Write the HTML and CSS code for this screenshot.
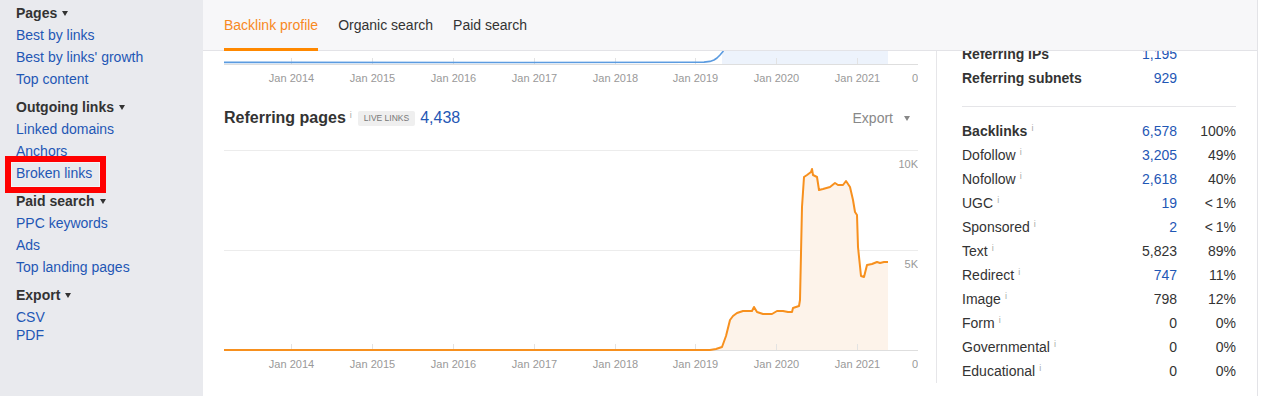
FILE: index.html
```html
<html>
  <head>
    <meta charset="utf-8">
    <link rel="stylesheet" href="styles.css">
  </head>

  <body>
    <div class="app">
      <nav class="sidebar">
        <div class="nav-group">
          <div class="nav-heading">Pages</div>
          <a class="nav-link">Best by links</a>
          <a class="nav-link">Best by links' growth</a>
          <a class="nav-link">Top content</a>
        </div>
        <div class="nav-group">
          <div class="nav-heading">Outgoing links</div>
          <a class="nav-link">Linked domains</a>
          <a class="nav-link">Anchors</a>
          <a class="nav-link"><span class="marked">Broken links</span></a>
        </div>
        <div class="nav-group">
          <div class="nav-heading">Paid search</div>
          <a class="nav-link">PPC keywords</a>
          <a class="nav-link">Ads</a>
          <a class="nav-link">Top landing pages</a>
        </div>
        <div class="nav-group">
          <div class="nav-heading">Export</div>
          <div class="export-links">
            <a class="nav-link">CSV</a>
            <a class="nav-link">PDF</a>
          </div>
        </div>
      </nav>

      <div class="main">
        <header class="tabs">
          <a class="tab active">Backlink profile</a>
          <a class="tab">Organic search</a>
          <a class="tab">Paid search</a>
        </header>

        <div class="viewport">
          <div class="content">
            <section class="charts">
              <svg class="chart" width="694" height="226" viewBox="0 0 694 226">
                <rect class="range-blue" x="498" y="0" width="166" height="200"></rect>
                <path class="axis" d="M0 200.5H694"></path>
                <path class="ticks" d="M67.5 194V200M148.5 194V200M229.5 194V200M310.5 194V200M391.5 194V200M471.5 194V200M552.5 194V200M633.5 194V200"></path>
                <path class="line-blue" d="M0 198.4L300 198.5L471 198.3L480 198.1L486 197.4L490 196L493 194L496 191L499 187.5L502 175L506 120L510 0"></path>
                <g class="axis-label">
                  <text x="67.5" y="217.5" text-anchor="middle">Jan 2014</text>
                  <text x="148.5" y="217.5" text-anchor="middle">Jan 2015</text>
                  <text x="229.5" y="217.5" text-anchor="middle">Jan 2016</text>
                  <text x="310.5" y="217.5" text-anchor="middle">Jan 2017</text>
                  <text x="391.5" y="217.5" text-anchor="middle">Jan 2018</text>
                  <text x="471.5" y="217.5" text-anchor="middle">Jan 2019</text>
                  <text x="552.5" y="217.5" text-anchor="middle">Jan 2020</text>
                  <text x="633.5" y="217.5" text-anchor="middle">Jan 2021</text>
                  <text x="694" y="217.5" text-anchor="end">0</text>
                </g>
              </svg>

              <div class="chart-title">
                <h2>Referring pages</h2>
                <span class="title-info">i</span>
                <span class="badge">LIVE LINKS</span>
                <span class="total">4,438</span>
                <a class="export">Export</a>
              </div>

              <svg class="chart" width="694" height="226" viewBox="0 0 694 226">
                <path class="grid" d="M0 0.5H694M0 100.5H694"></path>
                <path class="axis" d="M0 200.5H694"></path>
                <path class="area-orange" d="M0 200L486 200L492 199L498 197L502 186L506 170L509 166L513 163L519 161L528 161L530 157L533 162L539 164L548 164L553 161L559 161L564 162L568 162L569 158L575 156L576 150L578 57L580 27L583 25L587 22L588 19L589 25L593 27L595 40L599 39L606 37L611 33L614 35L619 35L622 31L626 37L629 50L631 62L633 65L634 97L637 126L640 127L643 115L648 114L653 112L656 113L660 112L664 112L664 200Z"></path>
                <path class="ticks" d="M67.5 194V200M148.5 194V200M229.5 194V200M310.5 194V200M391.5 194V200M471.5 194V200M552.5 194V200M633.5 194V200"></path>
                <path class="line-orange" d="M0 200L486 200L492 199L498 197L502 186L506 170L509 166L513 163L519 161L528 161L530 157L533 162L539 164L548 164L553 161L559 161L564 162L568 162L569 158L575 156L576 150L578 57L580 27L583 25L587 22L588 19L589 25L593 27L595 40L599 39L606 37L611 33L614 35L619 35L622 31L626 37L629 50L631 62L633 65L634 97L637 126L640 127L643 115L648 114L653 112L656 113L660 112L664 112"></path>
                <g class="axis-label">
                  <text x="694" y="18" text-anchor="end">10K</text>
                  <text x="694" y="118" text-anchor="end">5K</text>
                  <text x="67.5" y="217.5" text-anchor="middle">Jan 2014</text>
                  <text x="148.5" y="217.5" text-anchor="middle">Jan 2015</text>
                  <text x="229.5" y="217.5" text-anchor="middle">Jan 2016</text>
                  <text x="310.5" y="217.5" text-anchor="middle">Jan 2017</text>
                  <text x="391.5" y="217.5" text-anchor="middle">Jan 2018</text>
                  <text x="471.5" y="217.5" text-anchor="middle">Jan 2019</text>
                  <text x="552.5" y="217.5" text-anchor="middle">Jan 2020</text>
                  <text x="633.5" y="217.5" text-anchor="middle">Jan 2021</text>
                  <text x="694" y="217.5" text-anchor="end">0</text>
                </g>
              </svg>
            </section>

            <aside class="stats">
              <div class="stat-row strong">
                <span class="label">Referring IPs</span>
                <span class="value link">1,195</span>
                <span class="pct"></span>
              </div>
              <div class="stat-row strong">
                <span class="label">Referring subnets</span>
                <span class="value link">929</span>
                <span class="pct"></span>
              </div>

              <div class="divider"></div>

              <div class="stat-row strong">
                <span class="label">Backlinks<sup class="info">i</sup></span>
                <span class="value link">6,578</span>
                <span class="pct">100%</span>
              </div>
              <div class="stat-row">
                <span class="label">Dofollow<sup class="info">i</sup></span>
                <span class="value link">3,205</span>
                <span class="pct">49%</span>
              </div>
              <div class="stat-row">
                <span class="label">Nofollow<sup class="info">i</sup></span>
                <span class="value link">2,618</span>
                <span class="pct">40%</span>
              </div>
              <div class="stat-row">
                <span class="label">UGC<sup class="info">i</sup></span>
                <span class="value link">19</span>
                <span class="pct">&lt;&thinsp;1%</span>
              </div>
              <div class="stat-row">
                <span class="label">Sponsored<sup class="info">i</sup></span>
                <span class="value link">2</span>
                <span class="pct">&lt;&thinsp;1%</span>
              </div>
              <div class="stat-row">
                <span class="label">Text<sup class="info">i</sup></span>
                <span class="value">5,823</span>
                <span class="pct">89%</span>
              </div>
              <div class="stat-row">
                <span class="label">Redirect<sup class="info">i</sup></span>
                <span class="value link">747</span>
                <span class="pct">11%</span>
              </div>
              <div class="stat-row">
                <span class="label">Image<sup class="info">i</sup></span>
                <span class="value">798</span>
                <span class="pct">12%</span>
              </div>
              <div class="stat-row">
                <span class="label">Form<sup class="info">i</sup></span>
                <span class="value">0</span>
                <span class="pct">0%</span>
              </div>
              <div class="stat-row">
                <span class="label">Governmental<sup class="info">i</sup></span>
                <span class="value">0</span>
                <span class="pct">0%</span>
              </div>
              <div class="stat-row">
                <span class="label">Educational<sup class="info">i</sup></span>
                <span class="value">0</span>
                <span class="pct">0%</span>
              </div>
            </aside>
          </div>
        </div>
      </div>
    </div>
  </body>
</html>
```

FILE: styles.css
```css
html,
body {
  margin: 0;
  height: 396px;
  overflow: hidden;
  background: #fff;
}

body {
  font-family: "Liberation Sans", Arial, Helvetica, sans-serif;
  font-size: 14px;
  color: #333;
}

a {
  cursor: pointer;
}

.app {
  display: flex;
  height: 396px;
}

/* left navigation */

.sidebar {
  flex: none;
  width: 203px;
  box-sizing: border-box;
  padding: 2px 0 0 16px;
  background: #e9eaee;
}

.nav-group + .nav-group {
  margin-top: 6px;
}

.nav-heading {
  line-height: 22px;
  font-weight: bold;
  color: #333;
}

.nav-heading::after {
  content: "";
  display: inline-block;
  margin-left: 5px;
  vertical-align: 2px;
  border-left: 3.5px solid transparent;
  border-right: 3.5px solid transparent;
  border-top: 5px solid #333;
}

.nav-link {
  display: block;
  line-height: 22px;
  color: #1f57b5;
}

.export-links {
  margin-top: 2px;
}

.export-links .nav-link {
  line-height: 18px;
}

.marked {
  position: relative;
}

.marked::after {
  content: "";
  position: absolute;
  left: -11px;
  top: -9px;
  width: 101px;
  height: 37px;
  box-sizing: border-box;
  border: 6px solid #f00;
  box-shadow: inset 0 0 0 1px #f4f4f7;
}

/* main column */

.main {
  flex: none;
  width: 1054px;
  display: flex;
  flex-direction: column;
  border-right: 1px solid #e3e3e7;
}

.tabs {
  flex: none;
  display: flex;
  gap: 20px;
  height: 50px;
  padding-left: 21px;
  background: #f7f7f9;
  border-bottom: 1px solid #e3e3e7;
}

.tab {
  flex: none;
  height: 51px;
  box-sizing: border-box;
  padding-top: 16px;
  line-height: 18px;
  color: #333;
}

.tab.active {
  color: #f7891f;
  border-bottom: 3px solid #ff8800;
}

.viewport {
  flex: 1;
  overflow: hidden;
}

.content {
  display: flex;
  margin-top: -187px;
}

/* charts */

.charts {
  flex: none;
  width: 734px;
  box-sizing: border-box;
  padding-left: 21px;
  border-right: 1px solid #e6e6e9;
}

.chart {
  display: block;
}

.grid {
  stroke: #ececec;
  stroke-width: 1;
  fill: none;
}

.axis {
  stroke: #dedede;
  stroke-width: 1;
  fill: none;
}

.ticks {
  stroke: #e3e3e3;
  stroke-width: 1;
  fill: none;
}

.range-blue {
  fill: #edf3fc;
}

.line-blue {
  stroke: #5b9be0;
  stroke-width: 1.6;
  fill: none;
  stroke-linejoin: round;
}

.area-orange {
  fill: #fdf3ea;
}

.line-orange {
  stroke: #f7901e;
  stroke-width: 2;
  fill: none;
  stroke-linejoin: round;
}

.axis-label {
  font-family: "Liberation Sans", Arial, Helvetica, sans-serif;
  font-size: 11px;
  fill: #999;
}

.chart-title {
  display: flex;
  align-items: center;
  height: 56px;
  margin-bottom: 4px;
  padding-right: 26px;
}

.chart-title h2 {
  margin: 0;
  font-size: 16px;
  font-weight: bold;
  color: #333;
}

.title-info {
  align-self: flex-start;
  margin: 21px 0 0 4px;
  font-size: 9px;
  line-height: 9px;
  color: #aaa;
}

.info {
  margin-left: 4px;
  font-size: 9px;
  color: #aaa;
  vertical-align: 5px;
  line-height: 0;
}

.badge {
  margin-left: 6px;
  padding: 0 6px;
  line-height: 15px;
  font-size: 8.5px;
  color: #777;
  background: #efefef;
  border-radius: 2px;
}

.total {
  margin-left: 5px;
  font-size: 16px;
  color: #1f57b5;
}

.export {
  margin-left: auto;
  color: #888;
}

.export::after {
  content: "";
  display: inline-block;
  margin-left: 11px;
  vertical-align: 2px;
  border-left: 3.5px solid transparent;
  border-right: 3.5px solid transparent;
  border-top: 5px solid #888;
}

/* stats panel */

.stats {
  flex: none;
  width: 320px;
  box-sizing: border-box;
  padding: 178px 21px 0 25px;
}

.stat-row {
  display: grid;
  grid-template-columns: 1fr auto 59px;
  height: 24px;
  line-height: 24px;
}

.stat-row.strong .label {
  font-weight: bold;
}

.stat-row .value,
.stat-row .pct {
  text-align: right;
}

.stat-row .value.link {
  color: #1f57b5;
}

.stat-row .info {
  font-weight: normal;
}

.divider {
  height: 1px;
  margin: 16px 0 12px;
  background: #e5e5e8;
}
```
